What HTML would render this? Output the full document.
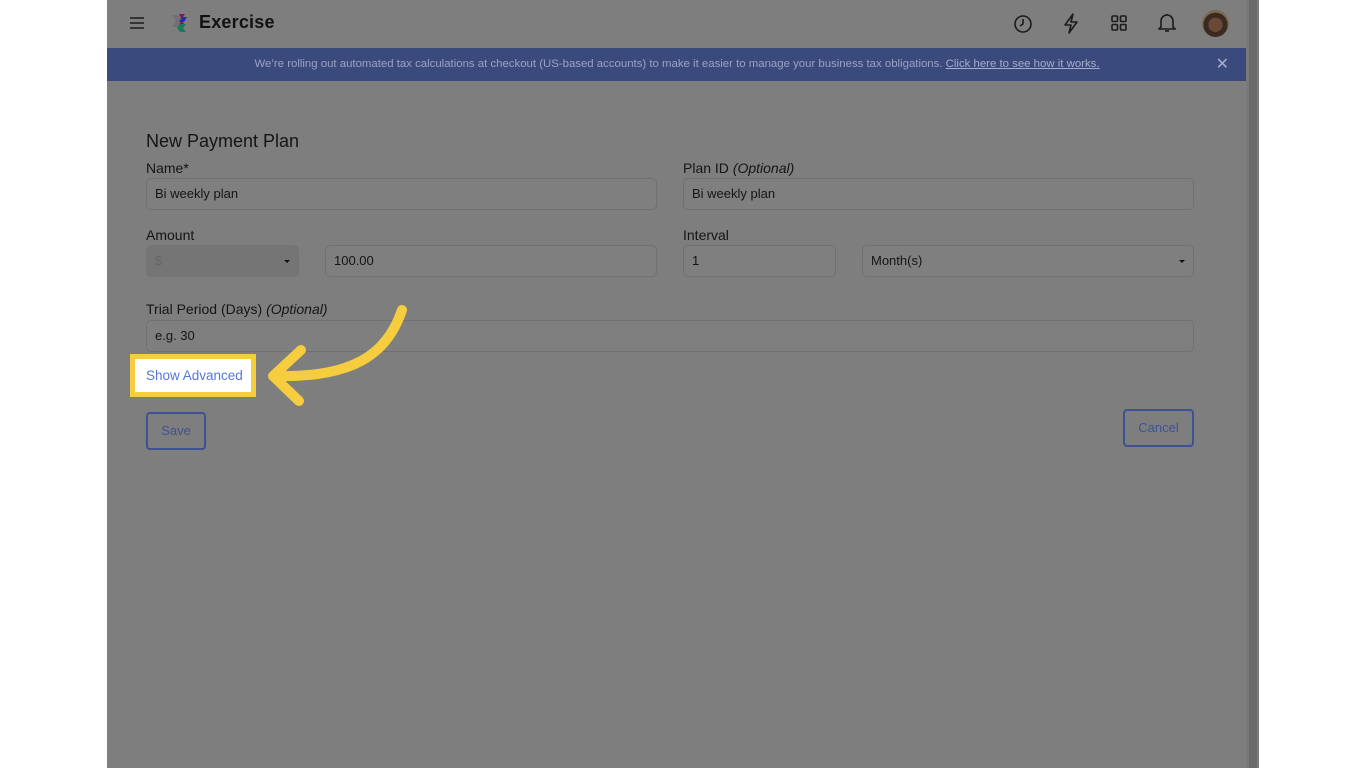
<!DOCTYPE html>
<html><head><meta charset="utf-8"><style>
*{box-sizing:border-box;margin:0;padding:0}
body{width:1366px;height:768px;background:#fff;position:relative;overflow:hidden;font-family:"Liberation Sans",Arial,sans-serif}
#app{position:absolute;left:107px;top:0;width:1152px;height:768px;background:#7e7e7e}
#sb{position:absolute;left:1249px;top:0;width:8px;height:768px;background:#6a6a6a}
#sbtrack{position:absolute;left:1246px;top:0;width:13px;height:768px;background:#797979}
.top{position:absolute;left:0;top:0;width:1140px;height:48px}
.banner{position:absolute;left:0;top:48px;width:1140px;height:33px;background:#3a4a7c;color:#9aa3c3;font-size:11.4px;text-align:center;line-height:33px}
.banner u{color:#a5aecb}
.lbl{position:absolute;font-size:14px;color:#151515}
.lbl i{font-style:italic}
.inp{position:absolute;height:32px;border:1px solid #707070;border-radius:5px;background:#7f7f7f;font-size:13px;color:#151515;line-height:30px;padding-left:8px}
.caret{position:absolute;right:8px;top:14px;width:0;height:0;border-left:3px solid transparent;border-right:3px solid transparent;border-top:3px solid #111}
.btn{position:absolute;border:2px solid #3d5294;border-radius:4px;color:#3d5294;font-size:13px;text-align:center}
</style></head><body>
<div id="app">
 <div class="top">
  <svg style="position:absolute;left:22px;top:15px" width="16" height="16" viewBox="0 0 16 16"><path d="M1 3h14M1 8h14M1 13h14" stroke="#1c1c1c" stroke-width="1.6"/></svg>
  <svg style="position:absolute;left:64px;top:13px" width="20" height="20" viewBox="0 0 20 20">
   <path d="M1 2h6l4 6-4 6H1l4-6z" fill="#6f6878" opacity=".7"/>
   <path d="M8 1h6l-4 6 4 5H8l3-5z" fill="#7a1a5a"/>
   <path d="M11 4h5l-3 5H8z" fill="#2a2aa8"/>
   <path d="M9 11h6l-3 4 3 4H9l-3-4z" fill="#1a7a5a"/>
  </svg>
  <div style="position:absolute;left:92px;top:12px;font-size:18px;font-weight:600;color:#111;font-family:'Liberation Sans',sans-serif;letter-spacing:0.2px">Exercise</div>
  <svg style="position:absolute;left:906px;top:14px" width="20" height="20" viewBox="0 0 20 20" fill="none" stroke="#1c1c1c" stroke-width="1.6"><circle cx="10" cy="10" r="8"/><path d="M10 5v5l-3 2"/></svg>
  <svg style="position:absolute;left:955px;top:13px" width="18" height="21" viewBox="0 0 18 21" fill="none" stroke="#1c1c1c" stroke-width="1.6" stroke-linejoin="round"><path d="M11 1L3 12h6l-2 8 8-11H9z"/></svg>
  <svg style="position:absolute;left:1004px;top:15px" width="16" height="16" viewBox="0 0 16 16" fill="none" stroke="#1c1c1c" stroke-width="1.6"><rect x="1" y="1" width="5.5" height="5.5" rx="1"/><rect x="9.5" y="1" width="5.5" height="5.5" rx="1"/><rect x="1" y="9.5" width="5.5" height="5.5" rx="1"/><rect x="9.5" y="9.5" width="5.5" height="5.5" rx="1"/></svg>
  <svg style="position:absolute;left:1051px;top:13px" width="18" height="20" viewBox="0 0 18 20" fill="none" stroke="#1c1c1c" stroke-width="1.6"><path d="M3 14V8a6 6 0 0112 0v6l2 2H1z"/><path d="M7 18h4"/><path d="M9 1v1"/></svg>
  <div style="position:absolute;left:1095px;top:10px;width:27px;height:27px;border-radius:50%;background:radial-gradient(circle at 50% 55%,#6a4a36 0 35%,#3a2a22 36% 60%,#7a6a50 61%)"></div>
 </div>
 <div class="banner">We’re rolling out automated tax calculations at checkout (US-based accounts) to make it easier to manage your business tax obligations. <u>Click here to see how it works.</u><span style="position:absolute;right:18px;top:0;font-size:16px;color:#a5aecb">✕</span></div>

 <div style="position:absolute;left:39px;top:131px;font-size:18px;color:#151515">New Payment Plan</div>
 <div class="lbl" style="left:39px;top:160px">Name*</div>
 <div class="inp" style="left:39px;top:178px;width:511px">Bi weekly plan</div>
 <div class="lbl" style="left:576px;top:160px">Plan ID <i>(Optional)</i></div>
 <div class="inp" style="left:576px;top:178px;width:511px">Bi weekly plan</div>

 <div class="lbl" style="left:39px;top:227px">Amount</div>
 <div class="inp" style="left:39px;top:245px;width:153px;background:#757575;border-color:#757575;color:#666">$<span class="caret"></span></div>
 <div class="inp" style="left:218px;top:245px;width:332px">100.00</div>
 <div class="lbl" style="left:576px;top:227px">Interval</div>
 <div class="inp" style="left:576px;top:245px;width:153px">1</div>
 <div class="inp" style="left:755px;top:245px;width:332px">Month(s)<span class="caret"></span></div>

 <div class="lbl" style="left:39px;top:301px">Trial Period (Days) <i>(Optional)</i></div>
 <div class="inp" style="left:39px;top:320px;width:1048px">e.g. 30</div>

 <div style="position:absolute;left:23px;top:354px;width:126px;height:43px;background:#fff;border:5px solid #f5cd3f;color:#5577dd;font-size:13.5px;line-height:33px;padding-left:11px">Show Advanced</div>
 <svg style="position:absolute;left:150px;top:300px" width="160" height="110" viewBox="0 0 160 110" fill="none" stroke="#f5cd3f" stroke-width="10" stroke-linecap="round" stroke-linejoin="round">
  <path d="M145 10C130 55 95 78 18 76"/>
  <path d="M44 50L16 76L42 101"/>
 </svg>

 <div class="btn" style="left:39px;top:412px;width:60px;height:38px;line-height:34px">Save</div>
 <div class="btn" style="left:1016px;top:409px;width:71px;height:38px;line-height:34px">Cancel</div>
</div>
<div id="sbtrack"></div><div id="sb"></div>
</body></html>
